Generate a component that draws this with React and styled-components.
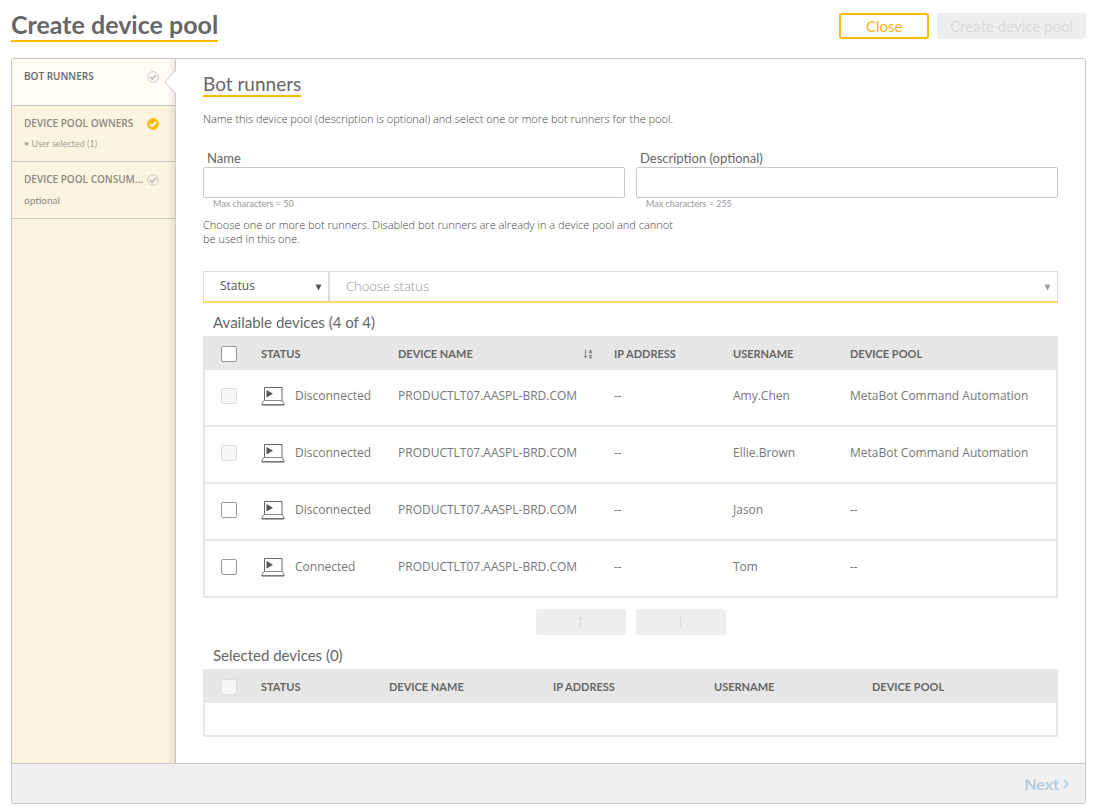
import React, { useState } from "react";
import styled, { createGlobalStyle } from "styled-components";
import { FaSortAlphaDown } from "react-icons/fa";

const light = `"Open Sans", "Liberation Sans", sans-serif`;

const GlobalStyle = createGlobalStyle`
  *, *::before, *::after { box-sizing: border-box; }
  body {
    margin: 0;
    background: #fff;
    color: #666;
    font-family: Lato, "Liberation Sans", sans-serif;
    font-size: 13px;
    line-height: 16px;
  }
  button, input, select { font: inherit; color: inherit; margin: 0; }
`;

const Page = styled.div`
  padding: 8px 10px 6px 11px;
`;

const Header = styled.header`
  display: flex;
  align-items: flex-start;
  justify-content: space-between;
`;

const PageTitle = styled.h1`
  margin: 0;
  border-bottom: 2px solid #fb0;
  font-size: 25px;
  line-height: 32px;
  font-weight: 700;
`;

const Actions = styled.div`
  display: flex;
  gap: 8px;
  padding-top: 5px;
`;

const Button = styled.button`
  min-width: 90px;
  height: 26px;
  padding: 0 11px;
  border: 2px solid #fb0;
  border-radius: 3px;
  background: #fff;
  color: #ffae1a;
  font-size: 15px;
  line-height: 20px;
  cursor: pointer;

  &:disabled {
    border-color: #eee;
    background: #eee;
    color: #dadada;
    cursor: default;
  }
`;

const Panel = styled.div`
  margin-top: 16px;
  border: 1px solid #c8c8c8;
  border-radius: 3px;
  overflow: hidden;
`;

const Columns = styled.div`
  display: flex;
`;

const Sidebar = styled.nav`
  position: relative;
  flex: 0 0 164px;
  border-right: 1px solid #c8c8c8;
  background: #fcf4e1;

  &::after {
    content: "";
    position: absolute;
    top: 0;
    right: 0;
    bottom: 0;
    width: 8px;
    background: linear-gradient(to right, rgba(110, 80, 40, 0), rgba(110, 80, 40, 0.12));
    pointer-events: none;
  }
`;

const StepLink = styled.a`
  position: relative;
  display: block;
  min-height: ${(p) => (p.$active ? 47 : 56)}px;
  padding: 9px 12px 0;
  border-bottom: 1px solid #c8c8c8;
  background: ${(p) => (p.$active ? "#fffdf6" : "transparent")};
  color: ${(p) => (p.$active ? "#666" : "#8c8882")};
  text-decoration: none;

  &:last-child { min-height: 57px; }
`;

const StepTop = styled.div`
  display: flex;
  align-items: center;
  justify-content: space-between;
  width: 135px;

  svg { flex: none; margin-top: 2px; }
`;

const StepTitle = styled.span`
  white-space: nowrap;
  font-family: ${light};
  font-size: 10px;
  font-weight: 600;
`;

const StepNote = styled.div`
  margin-top: 5px;
  font-size: ${(p) => (p.$small ? 9 : 10)}px;
  color: ${(p) => (p.$small ? "#a39e94" : "#8c8882")};
`;

const Notch = styled.svg`
  position: absolute;
  z-index: 1;
  top: 10px;
  right: -1px;
`;

const Main = styled.main`
  flex: 1;
  min-width: 0;
  padding: 14px 27px 26px;
`;

const SectionTitle = styled.h2`
  display: inline-block;
  margin: 0;
  border-bottom: 2px solid #fb0;
  font-size: 19px;
  line-height: 22px;
  font-weight: 400;
`;

const Intro = styled.p`
  max-width: 480px;
  margin: 0;
  padding: ${(p) => p.$pad};
  color: #444;
  font-family: ${light};
  font-weight: 300;
  font-size: 11px;
  line-height: 14px;
`;

const Fields = styled.div`
  display: grid;
  grid-template-columns: 1fr 1fr;
  gap: 11px;
`;

const Field = styled.div`
  display: flex;
  flex-direction: column;

  label { padding-left: 4px; font-size: 13px; line-height: 17px; }
  input {
    height: 31px;
    padding: 0 10px;
    border: 1px solid #c8c8c8;
    border-radius: 2px;
    background: #fff;
  }
  small {
    padding-left: 10px;
    color: #999;
    font-size: 9px;
    line-height: 12px;
  }
`;

const FilterBar = styled.div`
  display: grid;
  grid-template-columns: 126px 1fr;
  border: 1px solid #ddd;
  border-bottom: 2px solid #ffda66;
`;

const SelectBox = styled.div`
  position: relative;
  height: 29px;
  color: ${(p) => (p.$muted ? "#999" : "#555")};
  border-right: ${(p) => (p.$muted ? "0" : "2px solid #ddd")};

  select {
    appearance: none;
    width: 100%;
    height: 100%;
    padding: 0 16px 2px;
    border: 0;
    background: transparent;
    font-family: ${light};
    font-weight: ${(p) => (p.$muted ? 300 : 400)};
    font-size: ${(p) => (p.$muted ? 13 : 12)}px;
  }
  svg { position: absolute; right: 6px; top: 12px; pointer-events: none; }
`;

const ListTitle = styled.h3`
  margin: 0;
  padding: 11px 10px 6px;
  font-size: 15px;
  font-weight: 400;
`;

const Table = styled.table`
  width: 100%;
  table-layout: fixed;
  border: 2px solid #e7e7e7;
  border-bottom: 0;
  border-spacing: 0;

  th {
    height: 32px;
    padding: 0 8px;
    background: #e7e7e7;
    font-size: 11px;
    font-weight: 700;
    text-align: left;
  }
  td {
    height: 57px;
    padding: 0 8px 4px;
    border-bottom: 2px solid #e7e7e7;
    color: #777;
    font-family: ${light};
    font-size: 12px;
    white-space: nowrap;
  }
  th:first-child, td:first-child { padding-left: 16px; }
`;

const EmptyCell = styled.td`
  &&& { height: 34px; }
`;

const Check = styled.input`
  appearance: none;
  display: block;
  width: 16px;
  height: 16px;
  border: 1px solid #999;
  border-radius: 2px;
  background: #fff;

  &:checked { background: #fb0; }
  &:disabled { border-color: #ddd; background: #f7f7f7; }
`;

const SortHead = styled.div`
  display: flex;
  align-items: center;
  justify-content: space-between;
  padding-right: 5px;
  svg { color: #888; }
`;

const StatusCell = styled.div`
  display: flex;
  align-items: center;
  gap: 10px;
`;

const MoveBar = styled.div`
  display: flex;
  justify-content: center;
  gap: 10px;
  padding: 11px 0 1px;
`;

const Footer = styled.footer`
  display: flex;
  align-items: center;
  justify-content: flex-end;
  height: 40px;
  padding: 0 15px;
  border-top: 1px solid #c8c8c8;
  background: #f0f0f0;
`;

const NextButton = styled.button`
  display: flex;
  align-items: center;
  gap: 4px;
  padding: 0;
  border: 0;
  background: none;
  font-size: 16px;
  font-weight: 700;
  &:disabled { color: #b3cfe2; }
`;

function StepIcon({ done }) {
  return (
    <svg width="12" height="12" viewBox="0 0 12 12" fill="none" aria-hidden="true">
      <circle cx="6" cy="6" r="5.4" fill={done ? "#fb0" : "none"} stroke={done ? "#fb0" : "#c8c8c8"} />
      <path d="M3 6l2.2 2.2L9.2 4" stroke={done ? "#fff" : "#c4c4c4"} strokeWidth="1.9" />
    </svg>
  );
}

function Laptop() {
  return (
    <svg width="24" height="20" viewBox="0 0 24 20" fill="none" stroke="#666" aria-hidden="true">
      <path d="M3.5 14V1.500h17.500V14" />
      <path d="M3 14.500h18.500" stroke="#888" />
      <path d="M2.800 14.500L.6 18.500h22.800l-2.200-4" stroke="#777" />
      <path d="M1 19.500h22" stroke="#aaa" />
      <path d="M5.500 4v7.500l6.500-3.700z" fill="#555" stroke="none" />
    </svg>
  );
}

function Caret() {
  return (
    <svg width="7" height="7" viewBox="0 0 7 7" aria-hidden="true">
      <path d="M.5.5h6l-3 6z" fill="currentColor" />
    </svg>
  );
}

function Arrow({ down }) {
  return (
    <svg width="7" height="14" viewBox="0 0 7 14" fill="none" stroke="currentColor" aria-hidden="true">
      <path d={down ? "M3.500 2v12M1 11l2.500 2.500L6 11" : "M3.500 14V2M1 5l2.500-2.500L6 5"} />
    </svg>
  );
}

function Step({ title, active, done, children }) {
  return (
    <StepLink href="#" $active={active} aria-current={active ? "step" : undefined}>
      <StepTop>
        <StepTitle>{title}</StepTitle>
        <StepIcon done={done} />
      </StepTop>
      {children}
      {active && (
        <Notch width="12" height="26" viewBox="0 0 12 26" aria-hidden="true">
          <path d="M12 1.500L.8 13 12 24.500z" fill="#fff" />
          <path d="M11.500 0v1.500L.8 13l10.700 11.500V26" fill="none" stroke="#c8c8c8" />
        </Notch>
      )}
    </StepLink>
  );
}

const devices = [
  { status: "Disconnected", user: "Amy.Chen", pool: "MetaBot Command Automation" },
  { status: "Disconnected", user: "Ellie.Brown", pool: "MetaBot Command Automation" },
  { status: "Disconnected", user: "Jason" },
  { status: "Connected", user: "Tom" },
];

function Cols({ widths }) {
  return (
    <colgroup>
      {widths.map((w, i) => (
        <col key={i} width={w} />
      ))}
    </colgroup>
  );
}

export default function App() {
  const [checked, setChecked] = useState({});
  const toggle = (i) => setChecked((c) => ({ ...c, [i]: !c[i] }));
  return (
    <Page>
      <GlobalStyle />
      <Header>
        <PageTitle>Create device pool</PageTitle>
        <Actions>
          <Button type="button">Close</Button>
          <Button type="button" disabled>Create device pool</Button>
        </Actions>
      </Header>
      <Panel>
        <Columns>
          <Sidebar aria-label="Steps">
            <Step title="BOT RUNNERS" active />
            <Step title="DEVICE POOL OWNERS" done>
              <StepNote $small>• User selected (1)</StepNote>
            </Step>
            <Step title="DEVICE POOL CONSUM...">
              <StepNote>optional</StepNote>
            </Step>
          </Sidebar>
          <Main>
            <SectionTitle>Bot runners</SectionTitle>
            <Intro $pad="15px 0 24px">
              Name this device pool (description is optional) and select one or more bot runners for the pool.
            </Intro>
            <Fields>
              <Field>
                <label htmlFor="name">Name</label>
                <input id="name" type="text" maxLength={50} />
                <small>Max characters = 50</small>
              </Field>
              <Field>
                <label htmlFor="description">Description (optional)</label>
                <input id="description" type="text" maxLength={255} />
                <small>Max characters = 255</small>
              </Field>
            </Fields>
            <Intro $pad="8px 0 25px">
              Choose one or more bot runners. Disabled bot runners are already in a device pool and cannot be used in this one.
            </Intro>
            <FilterBar>
              <SelectBox>
                <select aria-label="Filter field"><option>Status</option></select>
                <Caret />
              </SelectBox>
              <SelectBox $muted>
                <select aria-label="Filter value"><option>Choose status</option></select>
                <Caret />
              </SelectBox>
            </FilterBar>
            <ListTitle>Available devices (4 of 4)</ListTitle>
            <Table>
              <Cols widths={[48, 137, 216, 119, 117, 214]} />
              <thead>
                <tr>
                  <th><Check type="checkbox" aria-label="Select all devices" /></th>
                  <th>STATUS</th>
                  <th><SortHead>DEVICE NAME<FaSortAlphaDown size={10} /></SortHead></th>
                  <th>IP ADDRESS</th>
                  <th>USERNAME</th>
                  <th>DEVICE POOL</th>
                </tr>
              </thead>
              <tbody>
                {devices.map((d, i) => (
                  <tr key={d.user}>
                    <td>
                      <Check
                        type="checkbox"
                        aria-label={`Select ${d.user}`}
                        disabled={!!d.pool}
                        checked={!!checked[i]}
                        onChange={() => toggle(i)}
                      />
                    </td>
                    <td><StatusCell><Laptop />{d.status}</StatusCell></td>
                    <td>PRODUCTLT07.AASPL-BRD.COM</td>
                    <td>--</td>
                    <td>{d.user}</td>
                    <td>{d.pool || "--"}</td>
                  </tr>
                ))}
              </tbody>
            </Table>
            <MoveBar>
              <Button type="button" disabled aria-label="Move up"><Arrow /></Button>
              <Button type="button" disabled aria-label="Move down"><Arrow down /></Button>
            </MoveBar>
            <ListTitle>Selected devices (0)</ListTitle>
            <Table>
              <Cols widths={[48, 128, 164, 161, 158, 192]} />
              <thead>
                <tr>
                  <th><Check type="checkbox" disabled aria-label="Select all selected devices" /></th>
                  <th>STATUS</th>
                  <th>DEVICE NAME</th>
                  <th>IP ADDRESS</th>
                  <th>USERNAME</th>
                  <th>DEVICE POOL</th>
                </tr>
              </thead>
              <tbody>
                <tr><EmptyCell colSpan={6} /></tr>
              </tbody>
            </Table>
          </Main>
        </Columns>
        <Footer>
          <NextButton type="button" disabled>
            Next
            <svg width="7" height="10" viewBox="0 0 7 10" fill="none" stroke="currentColor" strokeWidth="1.500" aria-hidden="true">
              <path d="M1 1l4 4-4 4" />
            </svg>
          </NextButton>
        </Footer>
      </Panel>
    </Page>
  );
}
